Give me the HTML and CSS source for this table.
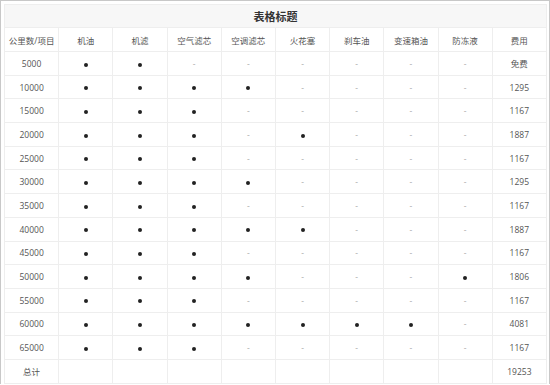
FILE: index.html
```html
<!DOCTYPE html>
<html lang="zh-CN">
<head>
    <meta charset="UTF-8">
    <title>表格标题</title>
    <link rel="stylesheet" href="styles.css">
</head>
<body>
    <div class="wrap">
        <table class="plan">
            <tr class="title-row"><th colspan="10">表格标题</th></tr>
            <tr class="head-row">
                <td>公里数/项目</td><td>机油</td><td>机滤</td><td>空气滤芯</td><td>空调滤芯</td>
                <td>火花塞</td><td>刹车油</td><td>变速箱油</td><td>防冻液</td><td>费用</td>
            </tr>
            <tr><td>5000</td><td><i class="dot"></i></td><td><i class="dot"></i></td><td class="na">-</td><td class="na">-</td><td class="na">-</td><td class="na">-</td><td class="na">-</td><td class="na">-</td><td>免费</td></tr>
            <tr><td>10000</td><td><i class="dot"></i></td><td><i class="dot"></i></td><td><i class="dot"></i></td><td><i class="dot"></i></td><td class="na">-</td><td class="na">-</td><td class="na">-</td><td class="na">-</td><td>1295</td></tr>
            <tr><td>15000</td><td><i class="dot"></i></td><td><i class="dot"></i></td><td><i class="dot"></i></td><td class="na">-</td><td class="na">-</td><td class="na">-</td><td class="na">-</td><td class="na">-</td><td>1167</td></tr>
            <tr><td>20000</td><td><i class="dot"></i></td><td><i class="dot"></i></td><td><i class="dot"></i></td><td class="na">-</td><td><i class="dot"></i></td><td class="na">-</td><td class="na">-</td><td class="na">-</td><td>1887</td></tr>
            <tr><td>25000</td><td><i class="dot"></i></td><td><i class="dot"></i></td><td><i class="dot"></i></td><td class="na">-</td><td class="na">-</td><td class="na">-</td><td class="na">-</td><td class="na">-</td><td>1167</td></tr>
            <tr><td>30000</td><td><i class="dot"></i></td><td><i class="dot"></i></td><td><i class="dot"></i></td><td><i class="dot"></i></td><td class="na">-</td><td class="na">-</td><td class="na">-</td><td class="na">-</td><td>1295</td></tr>
            <tr><td>35000</td><td><i class="dot"></i></td><td><i class="dot"></i></td><td><i class="dot"></i></td><td class="na">-</td><td class="na">-</td><td class="na">-</td><td class="na">-</td><td class="na">-</td><td>1167</td></tr>
            <tr><td>40000</td><td><i class="dot"></i></td><td><i class="dot"></i></td><td><i class="dot"></i></td><td><i class="dot"></i></td><td><i class="dot"></i></td><td class="na">-</td><td class="na">-</td><td class="na">-</td><td>1887</td></tr>
            <tr><td>45000</td><td><i class="dot"></i></td><td><i class="dot"></i></td><td><i class="dot"></i></td><td class="na">-</td><td class="na">-</td><td class="na">-</td><td class="na">-</td><td class="na">-</td><td>1167</td></tr>
            <tr><td>50000</td><td><i class="dot"></i></td><td><i class="dot"></i></td><td><i class="dot"></i></td><td><i class="dot"></i></td><td class="na">-</td><td class="na">-</td><td class="na">-</td><td><i class="dot"></i></td><td>1806</td></tr>
            <tr><td>55000</td><td><i class="dot"></i></td><td><i class="dot"></i></td><td><i class="dot"></i></td><td class="na">-</td><td class="na">-</td><td class="na">-</td><td class="na">-</td><td class="na">-</td><td>1167</td></tr>
            <tr><td>60000</td><td><i class="dot"></i></td><td><i class="dot"></i></td><td><i class="dot"></i></td><td><i class="dot"></i></td><td><i class="dot"></i></td><td><i class="dot"></i></td><td><i class="dot"></i></td><td class="na">-</td><td>4081</td></tr>
            <tr><td>65000</td><td><i class="dot"></i></td><td><i class="dot"></i></td><td><i class="dot"></i></td><td class="na">-</td><td class="na">-</td><td class="na">-</td><td class="na">-</td><td class="na">-</td><td>1167</td></tr>
            <tr><td>总计</td><td></td><td></td><td></td><td></td><td></td><td></td><td></td><td></td><td>19253</td></tr>
        </table>
    </div>
</body>
</html>
```

FILE: styles.css
```css
* {
    margin: 0;
    padding: 0;
    box-sizing: border-box;
}
body {
    background: #ffffff;
    font-family: 'Open Sans', 'Noto Sans CJK SC', sans-serif;
    color: #555;
}
.wrap {
    width: 550px;
    border: 1px solid #c8c8c8;
    border-bottom: none;
    padding: 3px 2px 0 3px;
}
.plan {
    width: 100%;
    border-collapse: collapse;
    table-layout: fixed;
    border: 1px solid #eeeeee;
}
.plan td,
.plan th {
    border: 1px solid #eeeeee;
    text-align: center;
    vertical-align: middle;
    font-size: 8.5px;
    font-weight: normal;
    height: 23.7px;
}
.title-row th {
    background: #f7f7f7;
    font-size: 11px;
    font-weight: bold;
    color: #333;
    height: 23px;
}
.head-row td {
    height: 24px;
}
.na {
    color: #aaa;
}
.dot {
    display: inline-block;
    width: 4px;
    height: 4px;
    border-radius: 50%;
    background: #222;
    vertical-align: middle;
}
```
